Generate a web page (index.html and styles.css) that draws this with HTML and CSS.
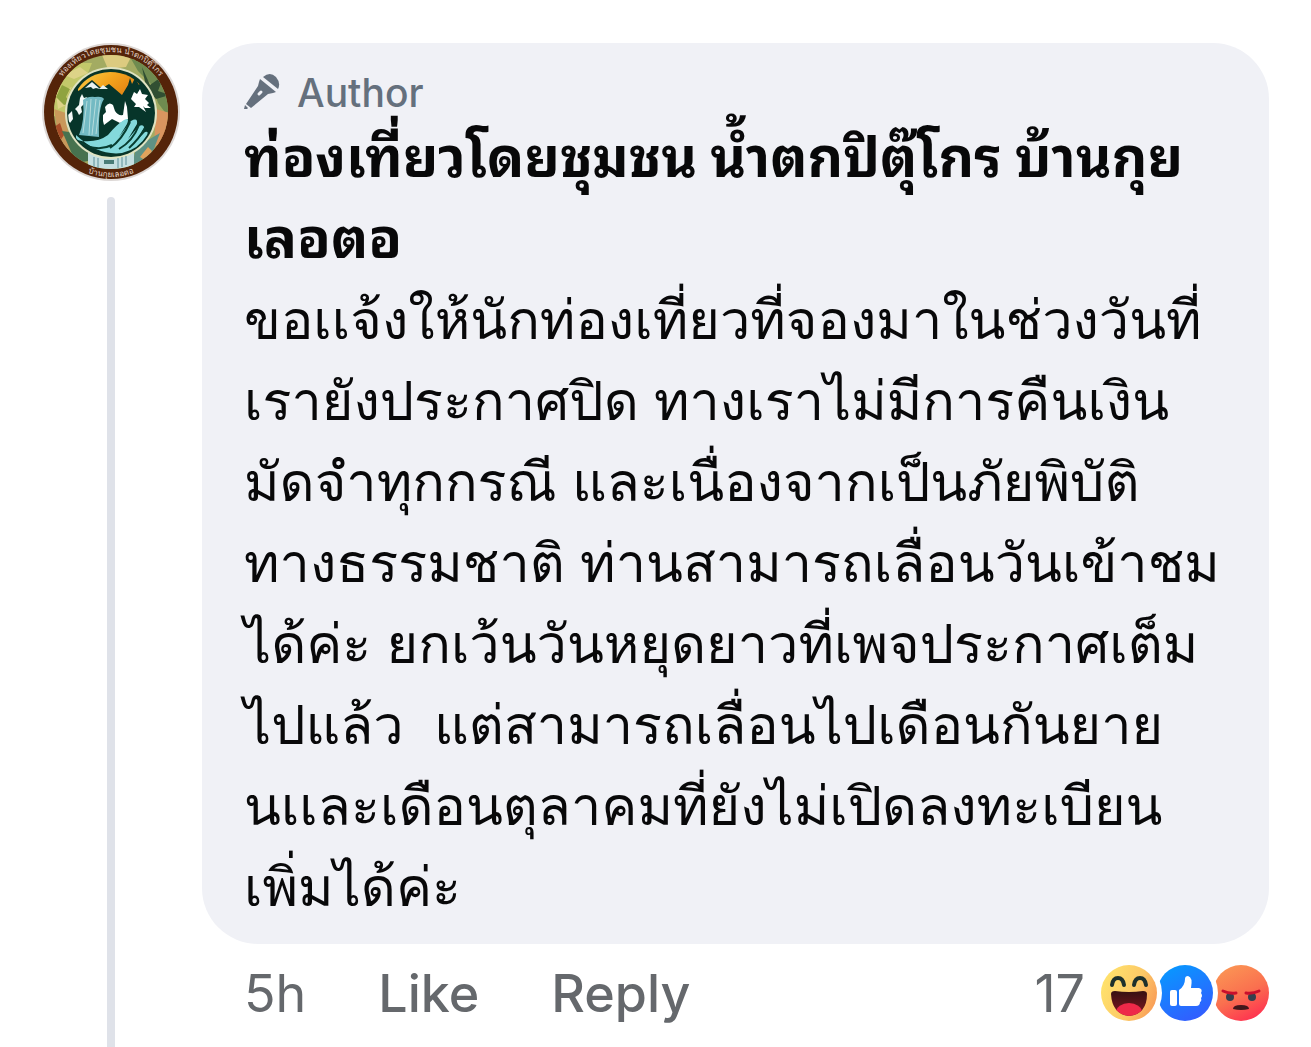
FILE: index.html
```html
<!DOCTYPE html>
<html lang="th">
<head>
<meta charset="utf-8">
<title>Comment</title>
<link rel="stylesheet" href="styles.css">
</head>
<body>
<article class="comment">
  <div class="side">
    <svg class="avatar" viewBox="0 0 138 138" role="img" aria-label="ท่องเที่ยวโดยชุมชน น้ำตกปิตุ๊โกร">
      <defs>
        <linearGradient id="sky" x1="0" y1="0" x2="1" y2="0.5">
          <stop offset="0" stop-color="#f9d04a"/>
          <stop offset="0.5" stop-color="#f3a41d"/>
          <stop offset="1" stop-color="#e07f12"/>
        </linearGradient>
        <clipPath id="leafClip"><circle cx="69" cy="69" r="57"/></clipPath>
        <clipPath id="sceneClip"><circle cx="69" cy="70" r="43"/></clipPath>
        <path id="topArc" d="M9 69a60 60 0 0 1 120 0"/>
        <path id="bottomArc" d="M4 69a65 65 0 0 0 130 0"/>
      </defs>
      <circle cx="69" cy="69" r="69" fill="#ddd8d6"/>
      <circle cx="69" cy="69" r="67" fill="#552409"/>
      <g clip-path="url(#leafClip)">
        <rect width="138" height="138" fill="#a3ab62"/>
        <path d="M10 40l22-20 18 0-12 30-10 30-18-8z" fill="#c3c86a"/>
        <path d="M14 50l16-6-6 10 8 4-16 8zM22 32l16-8 8 6-14 6z" fill="#ddd388"/>
        <path d="M20 42l8 4-4 8 6 6-8 2-8-8z" fill="#8fa33f"/>
        <path d="M12 66l12 4 2 20 12 20-20-6z" fill="#c9985a"/>
        <path d="M12 84l6-4 4 12-4 6zM118 76l6 4-2 14-5 2z" fill="#a84d28"/>
        <path d="M20 88l14 2 10 18 14 8-24 4z" fill="#47724f"/>
        <path d="M60 12h30l-6 12-18 2z" fill="#dccb80"/>
        <path d="M88 14l18 8 20 24 2 30-12-16-6-18-14-14z" fill="#6f8b50"/>
        <path d="M100 24l8 18 14-10-6 16 12 4-14 4-10-12z" fill="#314f32"/>
        <path d="M114 66l14 4-6 28-10 6z" fill="#d9955f"/>
        <path d="M94 104l24-14-10 26-18 8z" fill="#5f9184"/>
        <path d="M98 114l8-10 4 4-6 10z" fill="#e0a25c"/>
        <path d="M46 108h46v18H46z" fill="#c5dfe0"/>
      </g>
      <circle cx="69" cy="70" r="46" fill="#dfe3c2"/>
      <circle cx="69" cy="70" r="44" fill="#0a3527"/>
      <g clip-path="url(#sceneClip)">
        <path d="M36 46q10-16 32-17 22 0 34 18v8H36z" fill="url(#sky)"/>
        <path d="M20 56l18-9 8-7 4-3 8 7 4 0 5-3 6 5 7 6 6-10 2-7 2 6 3-6 4 7 6-10 4 10 10 10v68H20z" fill="#07352a"/>
        <path d="M43 45l7-6 8 7-4-1-3 1-2-2zM57 46l4-4 5 4-4 0z" fill="#e8f1ef"/>
        <path d="M89 56l3-7 3 2 3-5 2 5 6 1-3 4 4 4-2 2 4 3-6 0-2-2 3 6-7-5-5 0 2-3z" fill="#fff"/>
        <path d="M33 66l4-4 1-7 2-4 2 4 3-1-3 7-3 3 1 5-3 3-2-4zM24 74l6-6 1 8-3 4z" fill="#f4faf8"/>
        <path d="M61 72l3-3-1-5q4-6 8-2l2 6q3 5 8 4l2-14 2 6 1 12-8 4-8-4-8 6-1-4z" fill="#fff"/>
        <path d="M41 57q5-4 12-3 7-1 9 2-6 8-5 38l-20-2q6-14 4-35z" fill="#73bac3"/>
        <path d="M45 58l-4 32M49 56l-2 36M54 56l-4 36M58 57l-4 34" stroke="#b5dcdc" fill="none"/>
        <path d="M34 97q20 4 32-5 8-10 16-15 6-3 3 4l-8 13 12-16q7-4 6 3l-9 15 11-13q5-2 5 2l-8 13 9-9q4-1 2 3-8 14-25 18-24 3-46-18z" fill="#84d9dc"/>
        <path d="M36 98q18 12 34 4M68 105q12-8 20-26M77 106q14-8 20-24M87 105q10-9 16-20" fill="none" stroke="#073d31" stroke-width="2"/>
      </g>
      <path d="M52 114v10M56 115v10M76 115v10M80 114v10M84 113v9" stroke="#5d8f98"/>
      <path d="M62 119h10" stroke="#497c76" stroke-width="4"/>
      <text class="ring"><textPath href="#topArc" startOffset="50%">ท่องเที่ยวโดยชุมชน น้ำตกปิตุ๊โกร</textPath></text>
      <text class="ring"><textPath href="#bottomArc" startOffset="50%">บ้านกุยเลอตอ</textPath></text>
    </svg>
    <div class="thread"></div>
  </div>

  <div class="main">
    <div class="bubble">
      <div class="badge">
        <svg class="mic" viewBox="0 0 36 36" aria-hidden="true">
          <path d="M19 3q7-6 13 0 5 6 2 12z"/>
          <path d="M16 5l16 13-3 1-5 1L7 34l-5-4 12-18 1-4z"/>
          <path d="M1 31l3 3-1 1-3 0z"/>
          <path class="switch" d="M15 20l2-2"/>
        </svg>
        <span>Author</span>
      </div>
      <h2 class="name">ท่องเที่ยวโดยชุมชน น้ำตกปิตุ๊โกร บ้านกุย<br>เลอตอ</h2>
      <p class="text">ขอเเจ้งให้นักท่องเที่ยวที่จองมาในช่วงวันที่<br>
        เรายังประกาศปิด ทางเราไม่มีการคืนเงิน<br>
        มัดจำทุกกรณี และเนื่องจากเป็นภัยพิบัติ<br>
        ทางธรรมชาติ ท่านสามารถเลื่อนวันเข้าชม<br>
        ได้ค่ะ ยกเว้นวันหยุดยาวที่เพจประกาศเต็ม<br>
        ไปแล้ว&nbsp; แต่สามารถเลื่อนไปเดือนกันยาย<br>
        นเเละเดือนตุลาคมที่ยังไม่เปิดลงทะเบียน<br>
        เพิ่มได้ค่ะ</p>
    </div>

    <footer class="actions">
      <time>5h</time>
      <button type="button">Like</button>
      <button type="button">Reply</button>
      <div class="reactions">
        <span class="count">17</span>
        <svg class="faces" viewBox="0 0 168 56" role="img" aria-label="Haha, Like, Angry">
          <defs>
            <linearGradient id="haha" x1="0" y1="0.3" x2="1" y2="0.7">
              <stop offset="0" stop-color="#ffe36c"/>
              <stop offset="0.6" stop-color="#fcc866"/>
              <stop offset="1" stop-color="#f99b56"/>
            </linearGradient>
            <linearGradient id="like" x1="0.2" y1="0" x2="0.7" y2="1">
              <stop offset="0" stop-color="#0799ff"/>
              <stop offset="1" stop-color="#335cff"/>
            </linearGradient>
            <linearGradient id="angry" x1="0.3" y1="0" x2="0.8" y2="1">
              <stop offset="0" stop-color="#fb9454"/>
              <stop offset="0.5" stop-color="#fa704f"/>
              <stop offset="1" stop-color="#ff2b50"/>
            </linearGradient>
            <linearGradient id="mouth" x1="0" y1="0" x2="0" y2="1">
              <stop offset="0" stop-color="#301111"/>
              <stop offset="1" stop-color="#851622"/>
            </linearGradient>
            <clipPath id="mouthClip"><path d="M10 29q0-3 4-3 14 2 28 0 4 0 4 3 0 20-18 22-17-2-18-22z"/></clipPath>
          </defs>
          <circle cx="140" cy="28" r="28" fill="url(#angry)"/>
          <circle cx="84" cy="28" r="33" fill="#fff"/>
          <circle cx="84" cy="28" r="28" fill="url(#like)"/>
          <circle cx="28" cy="28" r="33" fill="#fff"/>
          <circle cx="28" cy="28" r="28" fill="url(#haha)"/>
          <path d="M11 20q1-7 6-7t6 7M33 20q1-7 6-7t6 7" fill="none" stroke="#1d302c" stroke-width="4" stroke-linecap="round"/>
          <g clip-path="url(#mouthClip)">
            <path d="M8 24h40v28H8z" fill="url(#mouth)"/>
            <ellipse cx="28" cy="47" rx="13" ry="9" fill="#ee2949"/>
          </g>
          <rect x="69" y="25" width="7" height="16" rx="2" fill="#fff"/>
          <path d="M78 25q6-4 6-11 0-3 3-3 5 1 3 12h8q4 1 2 5 2 3 0 5 1 3-1 4 0 4-4 4H80q-2 0-2-2z" fill="#fff"/>
          <circle cx="129" cy="32" r="4" fill="#353f4d"/>
          <circle cx="151" cy="32" r="4" fill="#353f4d"/>
          <path d="M122 26q6 3 13 2M158 26q-6 3-13 2" fill="none" stroke="#c90f2c" stroke-width="3" stroke-linecap="round"/>
          <path d="M132 44q0-4 8-4t8 4q-8 2-16 0z" fill="#43171b"/>
        </svg>
      </div>
    </footer>
  </div>
</article>
</body>
</html>
```
FILE: styles.css
```css
body {
  margin: 0;
  background: #fff;
  color: #080809;
  font-family: Inter, Loma, "Noto Sans Thai", sans-serif;
}

.comment {
  display: flex;
  gap: 22px;
  box-sizing: border-box;
  min-height: 100vh;
  padding: 43px 42px 0;
}

.side {
  display: flex;
  flex-direction: column;
  align-items: center;
  gap: 16px;
  flex: none;
  width: 138px;
}

.avatar {
  display: block;
  width: 138px;
  height: 138px;
}

.ring {
  fill: #e6d8cc;
  font-size: 8px;
  text-anchor: middle;
}

.thread {
  flex: 1;
  width: 8px;
  border-radius: 4px 4px 0 0;
  background: #dfe2e9;
}

.main {
  flex: 1;
  min-width: 0;
}

.bubble {
  padding: 24px 42px 17px;
  border-radius: 56px;
  background: #f0f1f6;
}

.badge {
  display: flex;
  align-items: center;
  gap: 17px;
  height: 50px;
  color: #65707d;
  font-size: 39px;
  font-weight: 500;
}

.mic {
  width: 36px;
  height: 36px;
  fill: #65707d;
}

.switch {
  stroke: #f0f1f6;
  stroke-width: 3;
  stroke-linecap: round;
}

.name,
.text {
  margin: 0;
  line-height: 81px;
  white-space: nowrap;
}

.name {
  font-family: Inter, "Noto Sans Thai Looped", Loma, sans-serif;
  font-size: 55px;
  font-weight: 700;
}

.text {
  font-size: 54px;
}

.actions {
  display: flex;
  align-items: center;
  gap: 72px;
  height: 98px;
  padding-left: 42px;
  color: #65686c;
  font-size: 52px;
}

.actions button {
  padding: 0;
  border: 0;
  background: none;
  color: inherit;
  font: inherit;
  font-weight: 500;
}

.reactions {
  display: flex;
  align-items: center;
  gap: 16px;
  margin-left: auto;
}

.faces {
  width: 168px;
  height: 56px;
}
```
